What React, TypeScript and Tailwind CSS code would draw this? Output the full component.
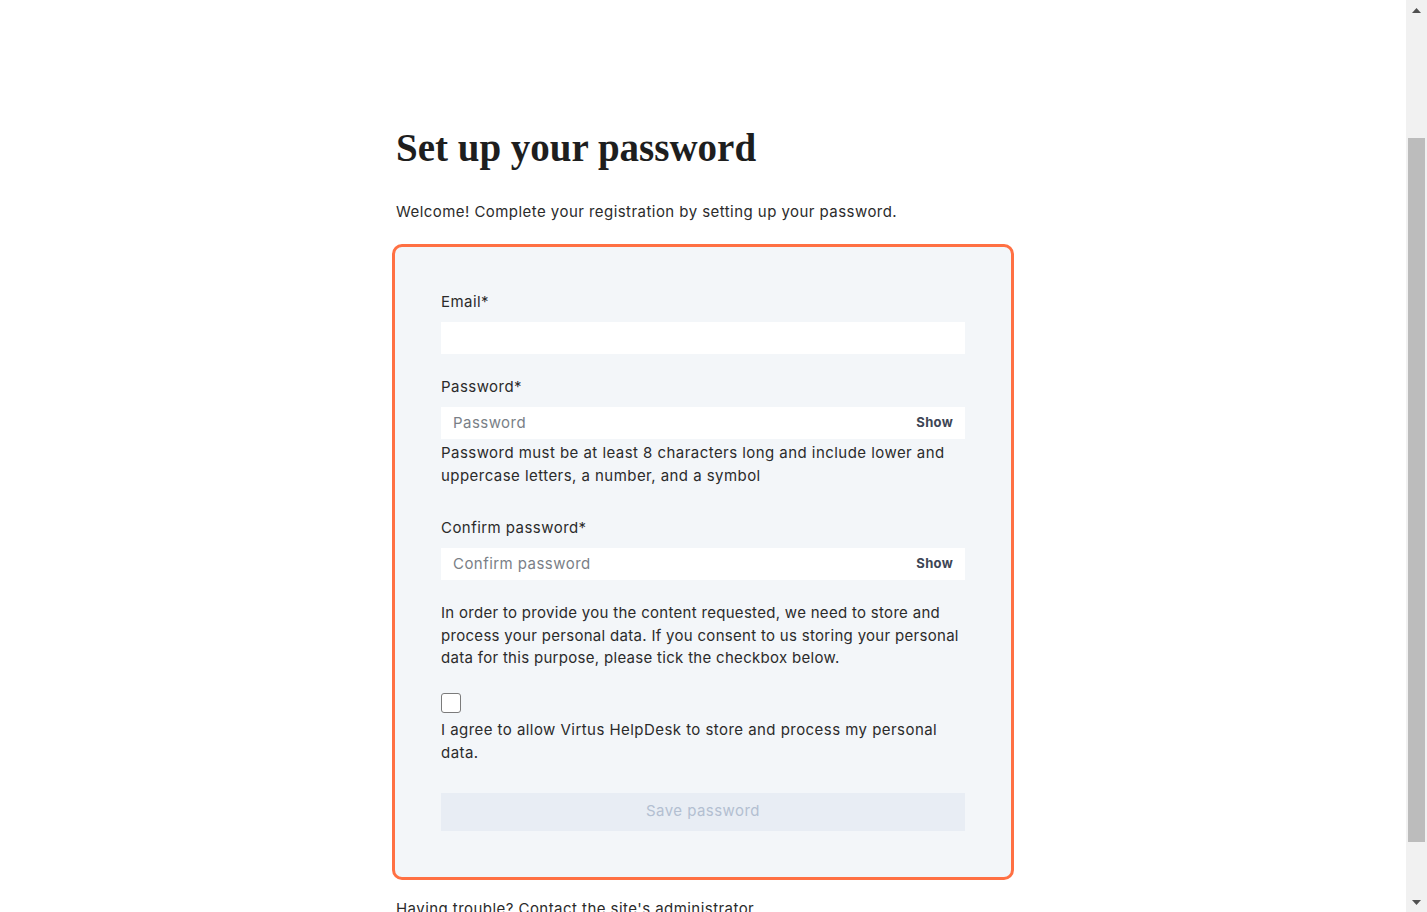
import React from "react";

const sans = { fontFamily: "Inter, 'Open Sans', sans-serif" };

function Field({ label, placeholder, show }: { label: string; placeholder?: string; show?: boolean }) {
  return (
    <div className="flex flex-col">
      <label className="mb-[9px] text-[15px] leading-[22px] tracking-[0.45px] text-[#2b2b2b]">{label}</label>
      <div className="flex h-[32px] items-center bg-white px-[12px]">
        <span className="flex-1 text-[15px] tracking-[0.45px] text-[#7a7f87]">{placeholder}</span>
        {show && <span className="text-[13px] font-bold tracking-[0.3px] text-[#3d4655]">Show</span>}
      </div>
    </div>
  );
}

export default function App() {
  return (
    <div className="flex h-[912px] w-[1427px] overflow-hidden bg-white" style={sans}>
      <main className="flex flex-1 justify-center">
        <div className="w-[622px] pt-[124px]">
          <h1
            className="pl-[4px] text-[39px] font-bold leading-[48px] text-[#1e1e1e]"
            style={{ fontFamily: "'Liberation Serif', serif" }}
          >
            Set up your password
          </h1>
          <p className="mt-[29px] pl-[4px] text-[15px] leading-[22px] tracking-[0.45px] text-[#2b2b2b]">
            Welcome! Complete your registration by setting up your password.
          </p>
          <div className="mt-[21px] rounded-[10px] border-[3px] border-[#ff7043] bg-[#f3f6f9] px-[46px] pt-[44px] pb-[46px] tracking-[0.45px] text-[#2b2b2b]">
            <Field label="Email*" />
            <div className="mt-[22px]">
              <Field label="Password*" placeholder="Password" show />
            </div>
            <p className="mt-[2px] text-[15px] leading-[23px]">
              Password must be at least 8 characters long and include lower and uppercase letters, a number, and a symbol
            </p>
            <div className="mt-[30px]">
              <Field label="Confirm password*" placeholder="Confirm password" show />
            </div>
            <p className="mt-[22px] text-[15px] leading-[22.5px] tracking-[0.3px]">
              In order to provide you the content requested, we need to store and process your personal data. If you
              consent to us storing your personal data for this purpose, please tick the checkbox below.
            </p>
            <div className="mt-[23px] h-[20px] w-[20px] rounded-[3px] border border-[#7b7b7b] bg-white" />
            <p className="mt-[5px] text-[15px] leading-[23px]">
              I agree to allow Virtus HelpDesk to store and process my personal data.
            </p>
            <button className="mt-[29px] flex h-[38px] w-full items-center justify-center bg-[#e8edf4] text-[15px] tracking-[0.45px] text-[#b3bfd1]">
              Save password
            </button>
          </div>
          <p className="mt-[18px] pl-[4px] text-[15px] leading-[22px] tracking-[0.45px] text-[#2b2b2b]">
            Having trouble? Contact the site's administrator
          </p>
        </div>
      </main>
      <aside className="flex w-[21px] flex-col items-center bg-[#f1f1f1]">
        <div className="flex h-[20px] items-center justify-center">
          <svg width="9" height="5" viewBox="0 0 9 5"><path d="M0 5 L4.5 0 L9 5 Z" fill="#505050" /></svg>
        </div>
        <div className="h-[118px]" />
        <div className="h-[704px] w-[17px] bg-[#bcbcbc]" />
        <div className="flex-1" />
        <div className="flex h-[20px] items-center justify-center">
          <svg width="9" height="5" viewBox="0 0 9 5"><path d="M0 0 L9 0 L4.5 5 Z" fill="#505050" /></svg>
        </div>
      </aside>
    </div>
  );
}
